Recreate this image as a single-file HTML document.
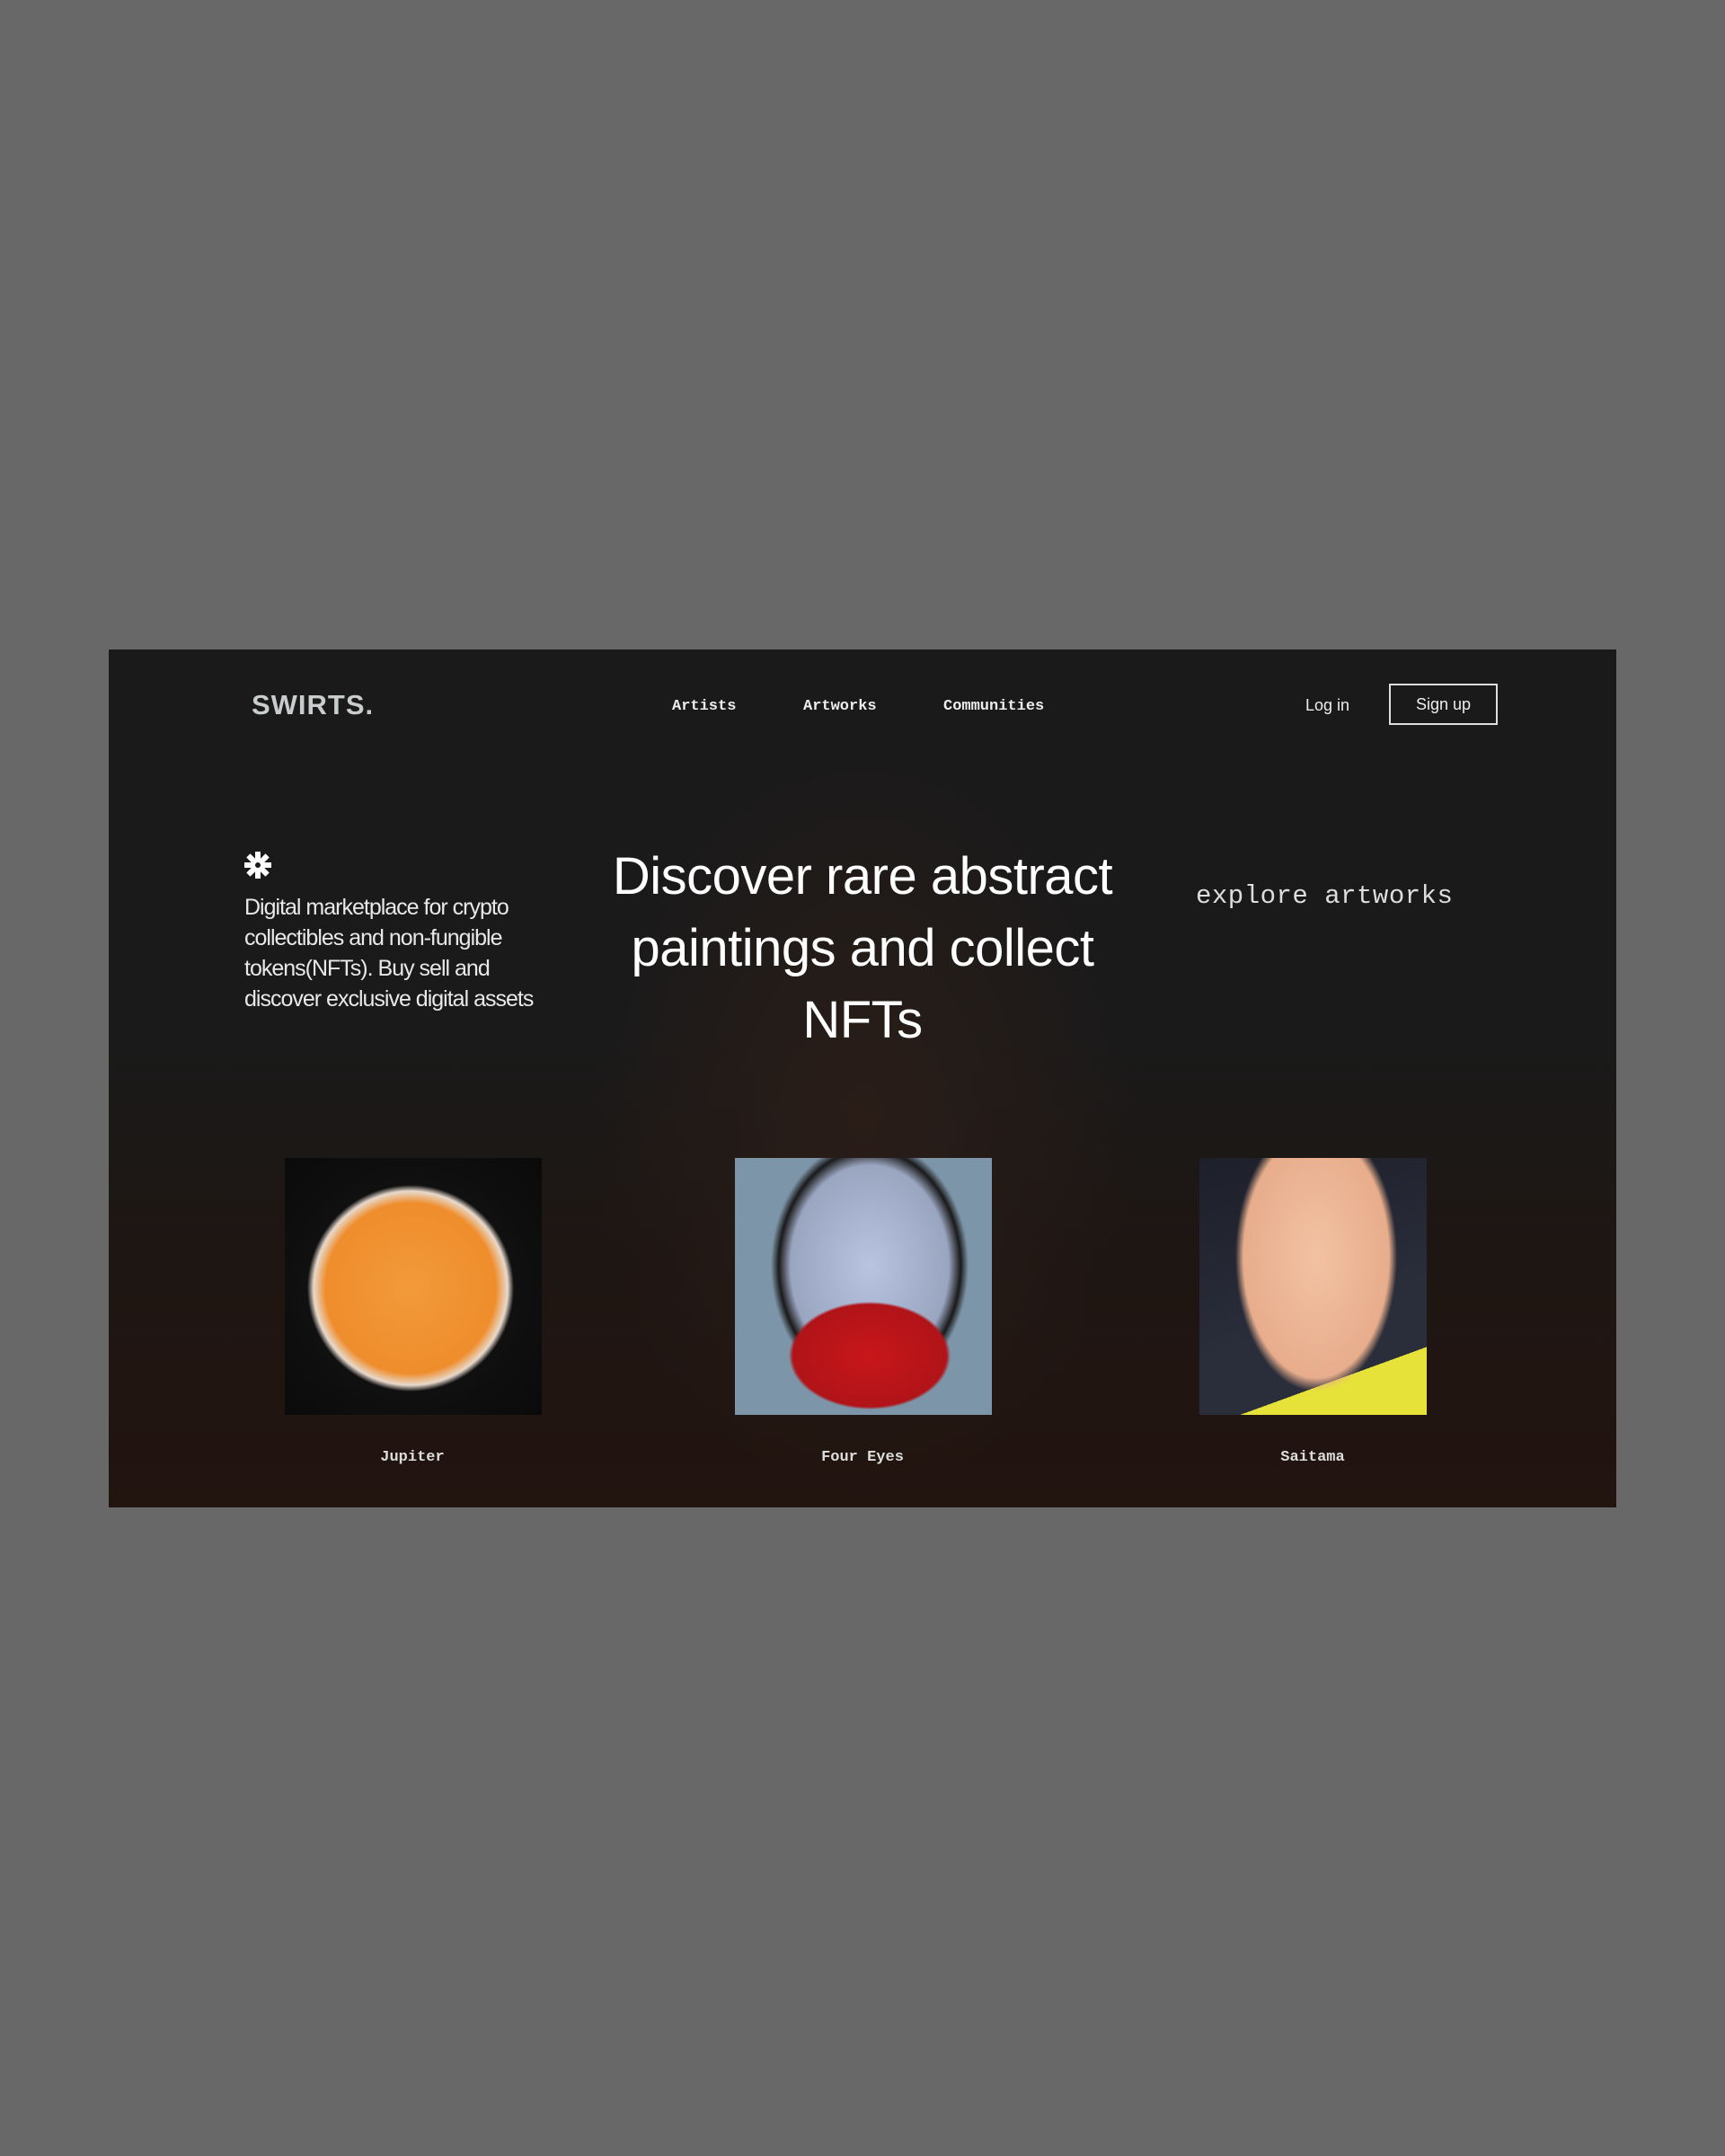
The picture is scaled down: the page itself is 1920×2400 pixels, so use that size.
<!DOCTYPE html>
<html><head><meta charset="utf-8"><style>
*{margin:0;padding:0;box-sizing:border-box}
body{width:1920px;height:2400px;background:#686868;position:relative;overflow:hidden;font-family:"Liberation Sans",sans-serif}
.panel{position:absolute;left:121px;top:723px;width:1678px;height:955px;overflow:hidden;
background:radial-gradient(ellipse 300px 420px at 840px 520px,#2a1d18 0%,rgba(26,26,26,0) 100%),linear-gradient(180deg,#1a1a1a 0%,#1a1a1a 45%,#1e1613 70%,#22140f 100%)}
.a{position:absolute}
.logo{left:159px;top:44px;font-size:31px;font-weight:bold;color:#c9cccc;letter-spacing:1px}
.nav{top:54px;font-family:"Liberation Mono",monospace;font-weight:bold;font-size:17px;color:#eee}
.login{left:1332px;top:52px;font-size:18px;color:#eee}
.signup{left:1425px;top:38px;width:121px;height:46px;border:2px solid #ddd;color:#eee;font-size:18px;text-align:center;line-height:42px}
.para{left:151px;top:270px;width:350px;font-size:25px;line-height:34px;color:#e8e8e8;letter-spacing:-1px}
.h1{left:530px;top:213px;width:618px;text-align:center;font-size:58px;line-height:80px;color:#fff;letter-spacing:-0.5px}
.exp{left:1210px;top:258px;font-family:"Liberation Mono",monospace;font-size:29px;color:#ddd;letter-spacing:0.5px}
.img{top:566px;height:286px}
.cap{top:890px;font-family:"Liberation Mono",monospace;font-weight:bold;font-size:17px;color:#ddd;text-align:center;width:300px}
</style></head><body>
<div class="panel">
<div class="a logo">SWIRTS.</div>
<div class="a nav" style="left:627px">Artists</div>
<div class="a nav" style="left:773px">Artworks</div>
<div class="a nav" style="left:929px">Communities</div>
<div class="a login">Log in</div>
<div class="a signup">Sign up</div>
<svg class="a" style="left:150px;top:224px" width="32" height="32" viewBox="-16 -16 32 32"><g fill="#fff"><circle r="8"/><g id="p"><rect x="-3" y="-15" width="6" height="9"/></g><use href="#p" transform="rotate(45)"/><use href="#p" transform="rotate(90)"/><use href="#p" transform="rotate(135)"/><use href="#p" transform="rotate(180)"/><use href="#p" transform="rotate(225)"/><use href="#p" transform="rotate(270)"/><use href="#p" transform="rotate(315)"/></g><circle r="3" fill="#1a1a1a"/></svg>
<div class="a para">Digital marketplace for crypto collectibles and non-fungible tokens(NFTs). Buy sell and discover exclusive digital assets</div>
<div class="a h1">Discover rare abstract paintings and collect NFTs</div>
<div class="a exp">explore artworks</div>
<div class="a img" style="left:196px;width:286px;background:radial-gradient(circle at 140px 145px,#f29a3a 0,#ef8d2c 95px,#e7d9cc 108px,#101010 115px,#0a0a0a 100%)"></div>
<div class="a img" style="left:697px;width:286px;background:radial-gradient(ellipse 90px 60px at 150px 220px,#c8161a 0,#b01418 95%,transparent 100%),radial-gradient(ellipse 110px 140px at 150px 120px,#b8c4e0 0,#9aa5c0 80%,#1a1a1a 92%,transparent 100%),#7d95a8"></div>
<div class="a img" style="left:1214px;width:253px;background:radial-gradient(ellipse 90px 150px at 130px 110px,#f2c2a2 0,#e7ad8c 90%,transparent 100%),linear-gradient(160deg,#1d1f2a 0,#2a2d3a 60%,#2a2d3a 80%,#e6e23a 80%)"></div>
<div class="a cap" style="left:188px">Jupiter</div>
<div class="a cap" style="left:689px">Four Eyes</div>
<div class="a cap" style="left:1190px">Saitama</div>
</div>
</body></html>
